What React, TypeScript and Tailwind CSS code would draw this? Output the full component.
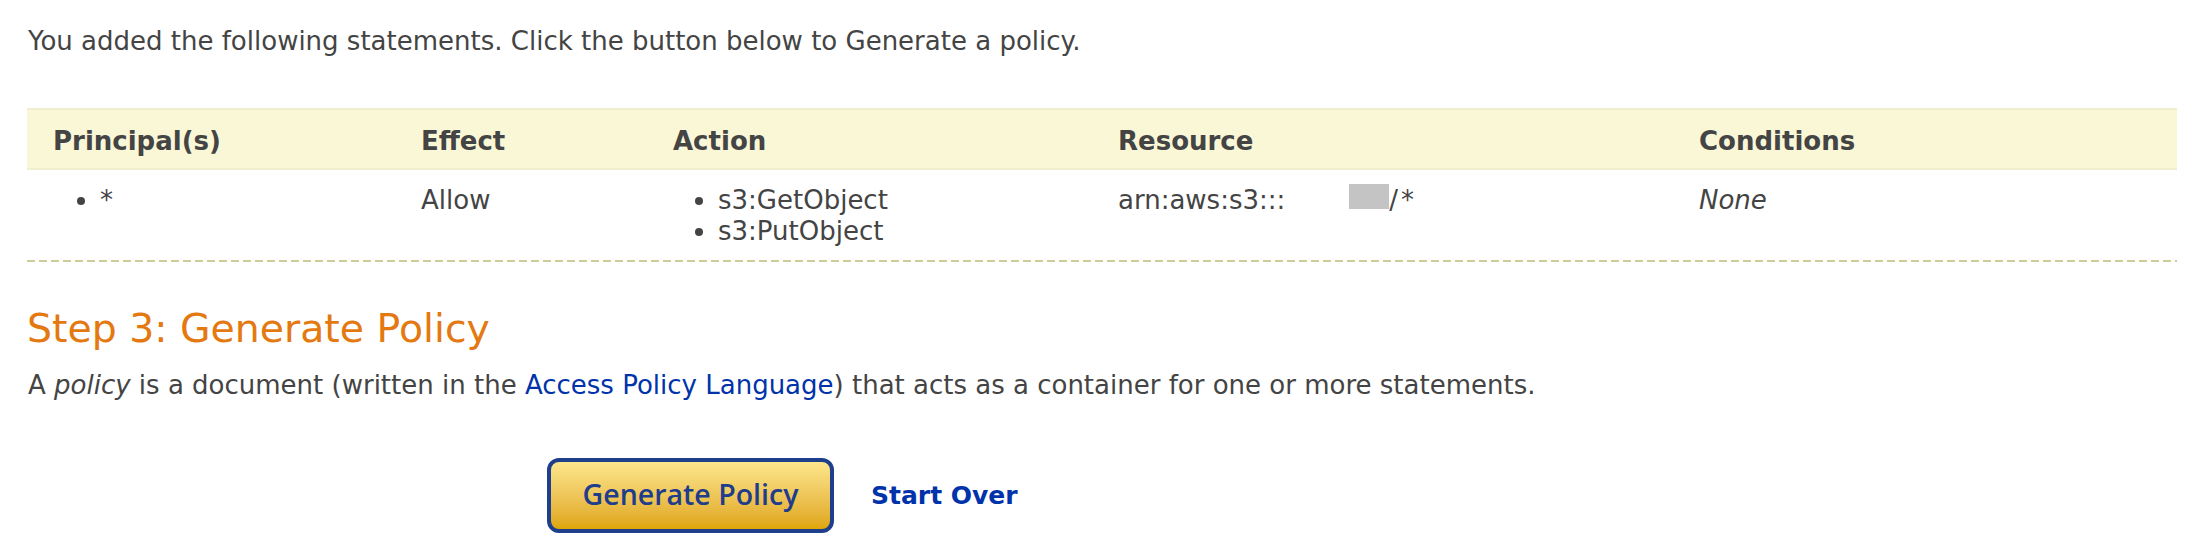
const statements = [
    {
        principals: ['*'],
        effect: 'Allow',
        actions: ['s3:GetObject', 's3:PutObject'],
        resource: 'arn:aws:s3:::',
        conditions: 'None',
    },
];

const cols = 'grid grid-cols-[368px_252px_445px_581px_1fr]';

export default function App() {
    return (
        <div className="min-h-[560px] bg-white pl-[27px] pr-[27px] pt-[26px] font-['DejaVu_Sans',Verdana,sans-serif] text-[26px] leading-[30px] text-[#444]">
            <p className="pl-px">You added the following statements. Click the button below to Generate a policy.</p>

            <div className="mt-[52px]">
                <div className={`${cols} border-y-2 border-[#efefcf] bg-[#faf7d7] font-bold`}>
                    <div className="px-[26px] pb-[12px] pt-[16px]">Principal(s)</div>
                    <div className="px-[26px] pb-[12px] pt-[16px]">Effect</div>
                    <div className="px-[26px] pb-[12px] pt-[16px]">Action</div>
                    <div className="px-[26px] pb-[12px] pt-[16px]">Resource</div>
                    <div className="px-[26px] pb-[12px] pt-[16px]">Conditions</div>
                </div>

                {statements.map((s, i) => (
                    <div key={i}>
                        <div className={`${cols} pb-[13px] pt-[15px]`}>
                            <div className="px-[26px]">
                                <ul className="list-disc pl-[47px]">
                                    {s.principals.map((p) => (
                                        <li key={p}>{p}</li>
                                    ))}
                                </ul>
                            </div>
                            <div className="px-[26px]">{s.effect}</div>
                            <div className="px-[26px]">
                                <ul className="list-disc pl-[45px] leading-[31px]">
                                    {s.actions.map((a) => (
                                        <li key={a}>{a}</li>
                                    ))}
                                </ul>
                            </div>
                            <div className="flex items-start px-[26px]">
                                <span>{s.resource}</span>
                                <span className="ml-[64px] mt-[-1px] inline-block h-[25px] w-[40px] bg-[#c4c4c4]" />
                                <span className="tracking-[3px]">/*</span>
                            </div>
                            <div className="px-[26px] italic">{s.conditions}</div>
                        </div>
                        <div className="h-[2px] bg-[repeating-linear-gradient(to_right,#cccc99_0_8px,transparent_8px_12px)]" />
                    </div>
                ))}
            </div>

            <h2 className="mt-[43px] text-[39.4px] leading-[46px] font-normal text-[#e47911]">Step 3: Generate Policy</h2>
            <p className="mt-[19px] pl-px">
                A <em>policy</em> is a document (written in the{' '}
                <a href="#" className="text-[#0033aa]">Access Policy Language</a>) that acts as a container for one or more statements.
            </p>

            <div className="ml-[520px] mt-[58px] flex items-center gap-[37px]">
                <button
                    type="button"
                    className="flex h-[75px] w-[287px] items-center justify-center rounded-[12px] border-[4px] border-[#1d3f8c] bg-linear-to-b from-[#fde68b] to-[#dfa600] pb-[3px] font-['Open_Sans',sans-serif] text-[28.5px] font-semibold text-[#203c8c]"
                >
                    Generate Policy
                </button>
                <a href="#" className="mt-[1px] text-[25px] font-bold text-[#0033aa]">Start Over</a>
            </div>
        </div>
    );
}
